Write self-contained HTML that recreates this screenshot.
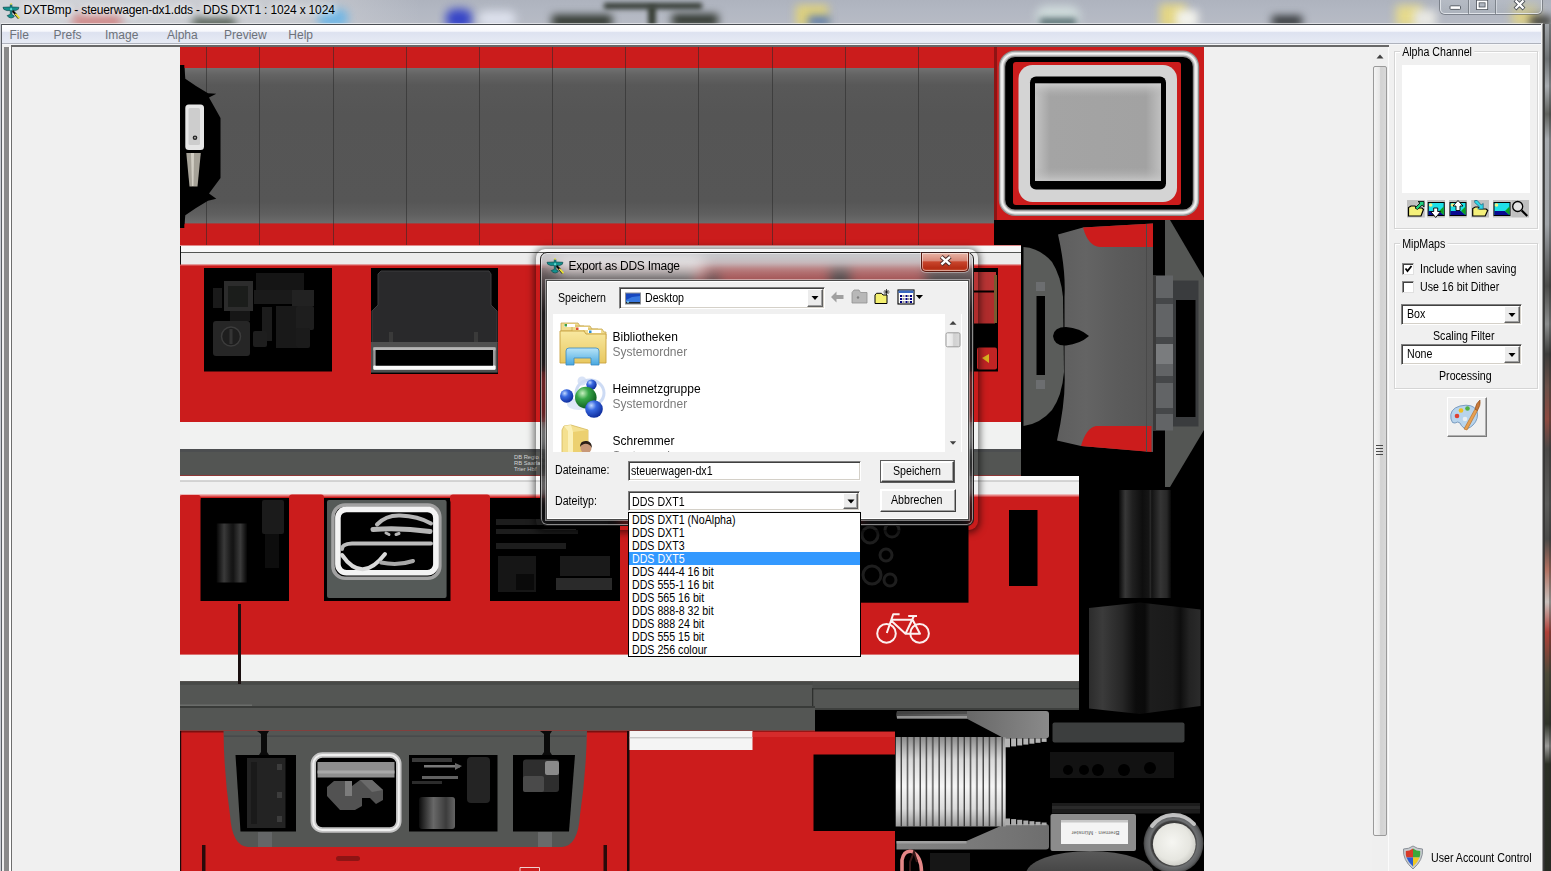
<!DOCTYPE html>
<html>
<head>
<meta charset="utf-8">
<title>DXTBmp</title>
<style>
html,body{margin:0;padding:0;}
body{width:1551px;height:871px;overflow:hidden;position:relative;background:#f0f0f0;font-family:"Liberation Sans",sans-serif;font-size:12px;color:#000;}
.abs{position:absolute;}
#titlebar{left:0;top:0;width:1551px;height:24px;background:#abb1b9;overflow:hidden;}
#titletext{left:23.500px;top:2.500px;font-size:12px;letter-spacing:-0.170px;white-space:nowrap;color:#000;text-shadow:0 0 6px #fff,0 0 10px #fff;}
#menubar{left:2px;top:24.500px;width:1540px;height:18.500px;background:linear-gradient(#ffffff 0,#f7f8fc 34%,#dde2f0 42%,#e7ebf5 100%);}
.mi{top:3.500px;color:#6d727a;font-size:12px;white-space:nowrap;}
#client{left:2px;top:46px;width:1540px;height:825px;background:#f0f0f0;}
.t11{font-size:11px;white-space:nowrap;}
</style>
</head>
<body>
<!-- title bar -->
<div id="titlebar" class="abs">
<div class="abs" style="left:0;top:0;width:1551px;height:24px;background:linear-gradient(#aeb3be 0,#b2b7c2 40%,#b7bbc5 100%)"></div>
<div class="abs" style="left:0;top:0;width:420px;height:24px;background:linear-gradient(90deg,rgba(214,216,220,0.9) 0,rgba(206,208,212,0.75) 70%,rgba(170,176,184,0) 100%)"></div>
<div class="abs" style="left:72px;top:14px;width:50px;height:14px;background:#d08888;filter:blur(5px);border-radius:6px"></div>
<div class="abs" style="left:192px;top:18px;width:44px;height:9px;background:#465246;filter:blur(4px);border-radius:5px"></div>
<div class="abs" style="left:318px;top:9px;width:30px;height:18px;background:#62b4ea;filter:blur(5px);border-radius:8px;opacity:0.85"></div>
<div class="abs" style="left:446px;top:9px;width:26px;height:20px;background:#2838c8;filter:blur(5px);border-radius:8px;opacity:0.9"></div>
<div class="abs" style="left:478px;top:11px;width:38px;height:16px;background:#e4e8f4;filter:blur(5px);border-radius:8px;opacity:0.85"></div>
<div class="abs" style="left:604px;top:3px;width:98px;height:6px;background:#30362e;filter:blur(2.500px)"></div>
<div class="abs" style="left:552px;top:15px;width:60px;height:12px;background:#2c322a;filter:blur(4px)"></div>
<div class="abs" style="left:648px;top:6px;width:8px;height:20px;background:#3a4038;filter:blur(2px)"></div>
<div class="abs" style="left:672px;top:14px;width:46px;height:12px;background:#2c322a;filter:blur(4px)"></div>
<div class="abs" style="left:796px;top:5px;width:32px;height:22px;background:#e0d27c;filter:blur(4.500px)"></div>
<div class="abs" style="left:808px;top:16px;width:22px;height:10px;background:#5878b8;filter:blur(4px)"></div>
<div class="abs" style="left:1036px;top:6px;width:44px;height:22px;background:#d0dcdc;filter:blur(5px);border-radius:10px"></div>
<div class="abs" style="left:1040px;top:18px;width:36px;height:8px;background:#5a7074;filter:blur(3px)"></div>
<div class="abs" style="left:1160px;top:4px;width:26px;height:24px;background:#e4d684;filter:blur(4.500px)"></div>
<div class="abs" style="left:1176px;top:10px;width:22px;height:18px;background:#f2f2ec;filter:blur(4px)"></div>
<div class="abs" style="left:1272px;top:16px;width:30px;height:10px;background:#2a2e30;filter:blur(4px)"></div>
<div class="abs" style="left:1396px;top:5px;width:26px;height:22px;background:#e6da8c;filter:blur(5px)"></div>
<div class="abs" style="left:1414px;top:10px;width:22px;height:18px;background:#e8e8e4;filter:blur(4px)"></div>
<div class="abs" style="left:1512px;top:4px;width:26px;height:22px;background:#dcd08a;filter:blur(5px)"></div>
<div class="abs" style="left:1530px;top:16px;width:22px;height:10px;background:#3a3a34;filter:blur(4px)"></div>
</div>
<!-- app icon -->
<svg class="abs" style="left:2px;top:2px" width="18" height="18" viewBox="0 0 18 18">
<path d="M8.300 2.500 H9.900 V5 L16.900 5.300 L16.300 7.300 L13.500 8.600 H9.900 V12.400 L12.300 14 L11.500 15.300 L9.100 16 L6.700 15.300 L5.200 13.600 L8.300 12.400 V8.600 H4.800 L1.800 7.300 L1 5.300 L8.300 5Z" fill="#12908e" stroke="#0a4a4c" stroke-width="0.700"/>
<rect x="8.300" y="1.200" width="1.600" height="1.600" fill="#e8e050"/>
<circle cx="9.100" cy="7.200" r="1.100" fill="#60d8d0"/>
<path d="M10.600 9 L14.500 13" stroke="#080808" stroke-width="2"/><path d="M13.200 11.800 L17.300 16.300" stroke="#e8e030" stroke-width="2"/><path d="M12.600 12.600 L16.200 16.800" stroke="#101010" stroke-width="0.800"/>
</svg>
<div id="titletext" class="abs"><span id="t_title">DXTBmp - steuerwagen-dx1.dds - DDS DXT1 : 1024 x 1024</span></div>
<!-- window controls -->
<div class="abs" style="left:1440px;top:-2px;width:102px;height:16px;border:1px solid rgba(230,234,238,0.85);border-radius:0 0 5px 5px;box-shadow:0 0 0 1px rgba(80,86,94,0.55);background:linear-gradient(rgba(190,196,204,0.5),rgba(160,168,176,0.35));box-sizing:border-box"></div>
<div class="abs" style="left:1468px;top:0;width:1px;height:14px;background:rgba(90,96,104,0.6)"></div><div class="abs" style="left:1469px;top:0;width:1px;height:13px;background:rgba(230,234,238,0.6)"></div>
<div class="abs" style="left:1495px;top:0;width:1px;height:14px;background:rgba(90,96,104,0.6)"></div><div class="abs" style="left:1496px;top:0;width:1px;height:13px;background:rgba(230,234,238,0.6)"></div>
<svg class="abs" style="left:1440px;top:0" width="102" height="14" viewBox="1440 0 102 14">
<rect x="1450" y="5.800" width="10.500" height="3.600" rx="0.800" fill="#fff" stroke="#4a5058" stroke-width="0.900"/>
<rect x="1477.800" y="1.500" width="8.600" height="6.800" fill="none" stroke="#4a5058" stroke-width="3.400"/>
<rect x="1477.800" y="1.500" width="8.600" height="6.800" fill="none" stroke="#fff" stroke-width="1.800"/>
<path d="M1515 0 L1524 9 M1524 0 L1515 9" stroke="#4a5058" stroke-width="4"/>
<path d="M1515.500 0.500 L1523.500 8.500 M1523.500 0.500 L1515.500 8.500" stroke="#fff" stroke-width="2.300"/>
</svg>
<!-- menu -->
<div class="abs" style="left:1px;top:22.600px;width:1542px;height:1px;background:rgba(255,255,255,0.55)"></div><div class="abs" style="left:1px;top:23.600px;width:1542px;height:1px;background:#4a4e54"></div>
<div id="menubar" class="abs">
<span class="abs mi" id="t_m1" style="left:7.500px">File</span>
<span class="abs mi" id="t_m2" style="left:51.500px">Prefs</span>
<span class="abs mi" id="t_m3" style="left:103px">Image</span>
<span class="abs mi" id="t_m4" style="left:165px">Alpha</span>
<span class="abs mi" id="t_m5" style="left:222px">Preview</span>
<span class="abs mi" id="t_m6" style="left:286.300px">Help</span>
</div>
<div class="abs" style="left:2px;top:42.800px;width:1540px;height:1.300px;background:#aeb2bc"></div><div class="abs" style="left:2px;top:44.100px;width:1540px;height:1px;background:#f6f7f9"></div>
<div id="client" class="abs" style="top:45px"></div>
<!-- TEXTURE -->
<svg id="tex" class="abs" style="left:180px;top:46px" width="1024" height="825" viewBox="180 46 1024 825">
<rect x="180" y="46" width="1024" height="825" fill="#000"/>
<defs>
<linearGradient id="roofg" x1="0" y1="0" x2="0" y2="1">
<stop offset="0" stop-color="#717171"/><stop offset="0.045" stop-color="#636363"/><stop offset="0.11" stop-color="#585858"/><stop offset="0.3" stop-color="#555555"/><stop offset="0.86" stop-color="#565656"/><stop offset="0.94" stop-color="#5f5f5f"/><stop offset="1" stop-color="#6d6d6d"/>
</linearGradient>
<linearGradient id="glassg" x1="0" y1="0" x2="1" y2="0">
<stop offset="0" stop-color="#c4c4c4"/><stop offset="0.12" stop-color="#a4a4a4"/><stop offset="0.88" stop-color="#a2a2a2"/><stop offset="1" stop-color="#c0c0c0"/>
</linearGradient>
<linearGradient id="cylg" x1="0" y1="0" x2="1" y2="0">
<stop offset="0" stop-color="#050505"/><stop offset="0.25" stop-color="#3a3a3a"/><stop offset="0.48" stop-color="#181818"/><stop offset="0.55" stop-color="#141414"/><stop offset="0.78" stop-color="#3c3c3c"/><stop offset="1" stop-color="#060606"/>
</linearGradient>
<linearGradient id="glassv" x1="0" y1="0" x2="0" y2="1"><stop offset="0" stop-color="#d0d0d0" stop-opacity="0.9"/><stop offset="0.14" stop-color="#b0b0b0" stop-opacity="0"/><stop offset="0.86" stop-color="#b0b0b0" stop-opacity="0"/><stop offset="1" stop-color="#cacaca" stop-opacity="0.9"/></linearGradient>
</defs>
<!-- BAND 1 roof -->
<g id="band1">
<rect x="180" y="47" width="814" height="198" fill="#cb1c1c"/>
<rect x="180" y="68" width="814" height="155.400" fill="url(#roofg)"/>
<g stroke="#2a2a2a" stroke-width="1" opacity="0.55">
<path d="M206.5 47V245M259.5 47V245M333.5 47V245M406.5 47V245M479.5 47V245M552.5 47V245M625.5 47V245M698.5 47V245M772.5 47V245M845.5 47V245M918.5 47V245"/>
</g>
<path d="M180 65.300 L184.500 68 L185.300 78.800 L196 86 L208 93.200 L216.300 93.700 L209 97.400 L220.500 118 V178 L209 193.600 L216.300 198.800 L208 200.800 L196 208 L185.300 215.300 L184.500 224 L180 228Z" fill="#000"/>
<rect x="180" y="65" width="4.300" height="163" fill="#000"/>
<rect x="185.300" y="104.600" width="18.700" height="45.400" rx="3.500" fill="#e6e6e6"/>
<rect x="188.500" y="108" width="11.500" height="37" rx="1.500" fill="#cdcdcd"/>
<circle cx="195" cy="137.700" r="2.300" fill="#222"/><circle cx="195" cy="137.700" r="0.900" fill="#bbb"/>
<path d="M186.300 153 H200.800 L197.500 186.400 H189.500Z" fill="#a6a298"/>
<path d="M191 153 H194 L193.500 186 H192Z" fill="#d2cec4"/>
<rect x="994" y="47" width="4" height="173" fill="#8e1414"/>
</g>
<!-- top-right window -->
<g id="trwin">
<rect x="997" y="47" width="207" height="173" fill="#cb1c1c"/>
<rect x="1002" y="53.700" width="194" height="159" rx="13" fill="#000" stroke="#8e8e8e" stroke-width="6.400"/>
<rect x="1002" y="53.700" width="194" height="159" rx="13" fill="none" stroke="#cfcfcf" stroke-width="4"/>
<rect x="1002" y="53.700" width="194" height="159" rx="13" fill="none" stroke="#f4f4f4" stroke-width="1.600"/>
<rect x="1013" y="62" width="168" height="143" rx="3" fill="#cb1c1c"/>
<rect x="1018.500" y="65" width="158.500" height="137" rx="14" fill="#d4d4d4"/>
<rect x="1030" y="76.500" width="136" height="113" rx="6" fill="#000"/>
<rect x="1035" y="83.500" width="126" height="97.500" fill="url(#glassg)"/>
<rect x="1035" y="83.500" width="126" height="97.500" fill="url(#glassv)"/>
</g>
<!-- BAND 2 -->
<g id="band2">
<rect x="180" y="245" width="841" height="231" fill="#cb1c1c"/>
<rect x="180" y="245.500" width="841" height="7" fill="#f8f8f8"/>
<rect x="180" y="252" width="841" height="1" fill="#535553"/>
<rect x="180" y="253" width="841" height="12" fill="#ececec"/>
<rect x="180" y="246" width="1" height="19" fill="#111"/>
<rect x="180" y="264.500" width="841" height="1.500" fill="#d84a4a"/>
<rect x="180" y="422" width="841" height="27" fill="#f1f2f1"/>
<rect x="180" y="449" width="841" height="26.500" fill="#535553"/>
<rect x="180" y="449" width="841" height="3" fill="#4c4e50"/>
<!-- window 1 -->
<rect x="204" y="268" width="128" height="103.500" fill="#000"/>
<rect x="224" y="281" width="29" height="30" fill="#2c2c2c"/>
<rect x="228" y="286" width="20" height="21" fill="#1b1d1b"/>
<rect x="213" y="288" width="9" height="20" fill="#1a1a1a"/>
<rect x="230" y="311" width="20" height="10" fill="#161616"/>
<rect x="213" y="321" width="37" height="35" rx="3" fill="#262626"/>
<circle cx="231" cy="336.500" r="9.500" fill="#1e1e1e" stroke="#3c3c3c" stroke-width="1.500"/>
<rect x="229.500" y="329" width="3" height="15" fill="#343434"/>
<rect x="256" y="273" width="48" height="20" fill="#151515"/>
<rect x="254" y="290" width="60" height="14" fill="#1a1a1a"/>
<rect x="292" y="290" width="22" height="16" fill="#222"/>
<rect x="262" y="307" width="10" height="34" fill="#1c1c1c"/>
<rect x="276" y="306" width="26" height="42" fill="#191919"/>
<rect x="296" y="306" width="18" height="24" rx="2" fill="#1e1e1e"/>
<rect x="296" y="328" width="14" height="20" rx="2" fill="#1b1b1b"/>
<rect x="253" y="331" width="14" height="16" rx="2" fill="#1e1e1e"/>
<!-- window 2 -->
<rect x="371" y="268" width="127" height="106" fill="#000"/>
<path d="M381 271 H489 L491 274 V305 L497 311 V343 H372 V311 L378 305 V274 Z" fill="#29292b"/>
<path d="M381 271 H489 L491 274 V305 L497 311 V343 H372 V311 L378 305 V274 Z" fill="none" stroke="#3c3c3e" stroke-width="1"/>
<rect x="389" y="332" width="4" height="11" fill="#3a3a3a"/><rect x="474" y="332" width="4" height="11" fill="#3a3a3a"/>
<rect x="371" y="342" width="126.700" height="30.600" fill="#505050"/>
<rect x="373.300" y="347.300" width="122.300" height="22.500" rx="1.500" fill="#9c9c9c"/>
<rect x="373.300" y="347.300" width="122.300" height="3" fill="#b6b6b6"/>
<rect x="373.300" y="365.500" width="122.300" height="4.300" rx="1" fill="#fbfbfb"/>
<rect x="375.600" y="350" width="117.400" height="15.700" fill="#000"/>
<!-- window 3 (right, mostly hidden) -->
<rect x="540" y="268" width="155" height="103.500" fill="#000"/><rect x="704" y="273" width="16" height="20" fill="#2a1010"/><rect x="830" y="268" width="20" height="103.500" fill="#000"/><rect x="925" y="268" width="73" height="103.500" fill="#000"/>
<rect x="972" y="272" width="24" height="18.500" fill="#b83434"/>
<rect x="972" y="292.500" width="23" height="31" fill="#b02c2c"/>
<rect x="994" y="275" width="3" height="48" fill="#7a5a30"/>
<rect x="977" y="347.500" width="20" height="22" rx="2" fill="#c02424"/>
<path d="M982 358 L989 354 V363 Z" fill="#d8b020"/>
<!-- tiny text -->
<text x="514" y="458.600" font-size="5.800" fill="#d2d2d2" font-family="Liberation Sans, sans-serif">DB Regio AG</text>
<text x="514" y="464.800" font-size="5.800" fill="#d2d2d2" font-family="Liberation Sans, sans-serif">RB Saarland</text>
<text x="514" y="471" font-size="5.800" fill="#d2d2d2" font-family="Liberation Sans, sans-serif">Trier Hbf</text>
</g>
<!-- BAND 3 -->
<g id="band3">
<rect x="180" y="476" width="899" height="255.500" fill="#cb1c1c"/>
<rect x="180" y="476" width="899" height="19.500" fill="#f0f0f0"/>
<rect x="180" y="476" width="899" height="4.500" fill="#fbfbfb"/>
<rect x="180" y="480.500" width="899" height="1" fill="#b4b4b4"/>
<rect x="180" y="494.500" width="899" height="2" fill="#e88080"/>
<rect x="180" y="654.600" width="899" height="27" fill="#f1f2f1"/>
<rect x="180" y="681.300" width="899" height="49.300" fill="#545654"/>
<rect x="180" y="681.300" width="633" height="3.500" fill="#474947"/>
<rect x="180" y="706" width="635" height="2" fill="#393b39"/>
<rect x="180" y="704.500" width="72" height="1.500" fill="#6a6c6a"/>
<rect x="812.500" y="681.300" width="266.500" height="6.700" fill="#4b4d4b"/>
<rect x="812.500" y="688" width="266.500" height="1.500" fill="#3a3c3a"/>
<rect x="812" y="688" width="1.300" height="18" fill="#2e302e"/>
<rect x="815" y="708" width="264" height="2" fill="#3e403e"/>
<rect x="815" y="710" width="264" height="22" fill="#000"/>
<!-- win A -->
<rect x="200.500" y="498" width="88.500" height="103" fill="#000"/>
<rect x="180" y="495" width="20.500" height="6" rx="2" fill="#cb1c1c"/>
<rect x="289" y="494.500" width="35" height="8" rx="3" fill="#cb1c1c"/>
<rect x="216.500" y="523.500" width="30.500" height="59" fill="url(#cylg)"/>
<rect x="262" y="500" width="22" height="34" rx="2" fill="#1b1b1b"/>
<rect x="265" y="534" width="14" height="34" fill="#0d0d0d"/>
<!-- win B -->
<rect x="324" y="498" width="126.500" height="103" fill="#000"/>
<rect x="327" y="500" width="119.600" height="98" rx="2" fill="#555a58"/>
<rect x="333" y="505" width="106.800" height="73.200" rx="12" fill="#000" stroke="#a2a2a2" stroke-width="3.600"/>
<rect x="337.900" y="509.400" width="98" height="63.400" rx="8.500" fill="none" stroke="#f4f4f4" stroke-width="5.600"/>
<g fill="none" stroke="#b6b6b6" stroke-width="4" stroke-linecap="round">
<path d="M377 524.500 Q386 515 400 515.500 Q418 516 431 523.500"/>
<path d="M373 529.500 Q400 527.500 430 531.500" stroke-width="5"/>
<path d="M386 533 L389 534.500 M396 534.500 L399 533.500" stroke-width="3"/>
<path d="M342 549 Q342 544 352 543.500 H431" stroke="#bcbcbc"/>
<path d="M342 555 Q362 584 385 554" stroke="#dadada"/>
<path d="M381 562.500 Q398 566 413 561" stroke="#a8a8a8"/>
</g>
<!-- win C -->
<rect x="450" y="494.500" width="40" height="8" rx="3" fill="#cb1c1c"/>
<rect x="490" y="498" width="130" height="103" fill="#000"/>
<g fill="#1d1d1d">
<rect x="496" y="519" width="112" height="6"/><rect x="496" y="529" width="80" height="5"/><rect x="538" y="530" width="40" height="4"/>
<rect x="496" y="543" width="70" height="6"/><rect x="530" y="545" width="36" height="4"/>
<rect x="498" y="556" width="38" height="36" fill="#161616"/><rect x="516" y="574" width="18" height="16" fill="#0a0a0a"/>
<rect x="556" y="578" width="56" height="12" fill="#2a2a2a"/><rect x="560" y="556" width="50" height="20" fill="#1a1a1a"/>
</g>
<!-- right part -->
<rect x="860" y="498" width="108.500" height="104.700" fill="#000"/>
<g fill="none" stroke="#1e1e1e" stroke-width="3"><circle cx="870" cy="535" r="8"/><circle cx="886" cy="555" r="6"/><circle cx="872" cy="575" r="9"/><circle cx="890" cy="580" r="6"/><circle cx="892" cy="530" r="7"/></g>
<rect x="1009" y="510" width="28.500" height="76" fill="#000"/>
<!-- bicycle -->
<g fill="none" stroke="#fcf0f0" stroke-width="2" stroke-linejoin="round">
<circle cx="886.500" cy="633.400" r="9.300"/><circle cx="919.600" cy="633.400" r="9.300"/>
<path d="M899.600 614.200 H893.200 L886.800 633 M892.200 619.800 H912.600 M891.600 621 L905.500 633.800 H920 L912.600 619.800 M905.500 633.800 L913.800 616.200 M908.200 616 H917"/>
</g>
<!-- vertical rod -->
<rect x="238" y="604" width="3" height="80" fill="#1a1010"/>
</g>
<!-- BAND 4 -->
<defs>
<linearGradient id="corrg" x1="0" y1="0" x2="0" y2="1">
<stop offset="0" stop-color="#8c8c8c"/><stop offset="0.25" stop-color="#d8d8d8"/><stop offset="0.55" stop-color="#f6f6f6"/><stop offset="0.8" stop-color="#dcdcdc"/><stop offset="1" stop-color="#9a9a9a"/>
</linearGradient>
<linearGradient id="wedgeg" x1="0" y1="0" x2="1" y2="0">
<stop offset="0" stop-color="#484848"/><stop offset="0.5" stop-color="#6a6a6a"/><stop offset="1" stop-color="#8a8a8a"/>
</linearGradient>
<pattern id="corrp" x="895.700" y="0" width="6.300" height="10" patternUnits="userSpaceOnUse"><rect x="5" y="0" width="1.200" height="10" fill="#303030"/></pattern>
<linearGradient id="w3g" x1="0" y1="0" x2="1" y2="0">
<stop offset="0" stop-color="#0c0c0c"/><stop offset="0.4" stop-color="#686868"/><stop offset="0.75" stop-color="#3c3c3c"/><stop offset="1" stop-color="#646464"/>
</linearGradient>
<radialGradient id="lampg" cx="0.5" cy="0.5" r="0.5">
<stop offset="0" stop-color="#4a4a4a"/><stop offset="0.74" stop-color="#3c3c3c"/><stop offset="0.8" stop-color="#6e7072"/><stop offset="0.93" stop-color="#5c5e60"/><stop offset="1" stop-color="#3e3e3e"/>
</radialGradient>
<radialGradient id="lampc" cx="0.45" cy="0.45" r="0.6"><stop offset="0" stop-color="#f6f6f2"/><stop offset="0.7" stop-color="#e6e6e0"/><stop offset="1" stop-color="#c8c8c2"/></radialGradient>
<linearGradient id="ellg" x1="0" y1="0" x2="0" y2="1"><stop offset="0" stop-color="#5a5a5a"/><stop offset="0.5" stop-color="#444"/><stop offset="1" stop-color="#3a3a3a"/></linearGradient>
<linearGradient id="wedgeg2" x1="0" y1="0" x2="1" y2="0"><stop offset="0" stop-color="#848484"/><stop offset="0.5" stop-color="#7a7a7a"/><stop offset="1" stop-color="#6e6e6e"/></linearGradient>
</defs>
<g id="band4">
<rect x="180" y="731.500" width="715" height="140" fill="#cc1c1c"/>
<rect x="180" y="731" width="448" height="1.500" fill="#7a1010"/>
<rect x="180" y="731" width="1.200" height="140" fill="#1a0a0a"/>
<!-- gray panel -->
<path d="M223.500 731 H587 Q586 775 580 815 Q578 846 562 847 H248 Q232 846 230 815 Q224 775 223.500 731Z" fill="#545654"/>
<rect x="224" y="735.500" width="362" height="1.200" fill="#444648"/>
<rect x="258" y="832" width="14" height="15" fill="#707274" opacity="0.6"/><rect x="538" y="832" width="14" height="15" fill="#78797b" opacity="0.6"/>
<!-- W1 -->
<path d="M235.500 755 H296 V831.500 H240.500Z" fill="#000"/>
<rect x="247" y="758" width="38.500" height="70" fill="#232323"/>
<rect x="251" y="762" width="6" height="62" fill="#1a1a1a"/>
<rect x="277" y="764" width="5" height="6" fill="#3c3c3c"/><rect x="277" y="792" width="5" height="6" fill="#3c3c3c"/><rect x="277" y="816" width="5" height="6" fill="#3c3c3c"/>
<path d="M257 731 H269 L267 734 V752 L269 755 H259 L261 752 V734Z" fill="#0a0a0a"/>
<!-- W2 -->
<rect x="313.300" y="755" width="85.500" height="75" rx="9" fill="#000" stroke="#c4c4c4" stroke-width="5.500"/>
<rect x="313.300" y="755" width="85.500" height="75" rx="9" fill="none" stroke="#f0f0f0" stroke-width="2"/>
<rect x="317.500" y="762" width="77" height="15.500" fill="#8e8e8e"/>
<rect x="317.500" y="770.500" width="77" height="3" fill="#a8a8a8"/>
<path d="M327 787 L334 781 H345 V786 H352 L360 780 H372 L383 790 V800 L376 804 L370 798 H362 V806 L355 810 H340 L327 796Z" fill="#525252"/>
<path d="M345 781 H352 V796 H345Z" fill="#7c7c7c"/>
<path d="M360 780 H372 L383 790 L372 792Z" fill="#6a6a6a"/>
<!-- W3 -->
<rect x="409" y="755" width="88.500" height="76.500" fill="#000"/>
<rect x="419" y="797" width="36" height="32" rx="3" fill="url(#w3g)"/>
<rect x="467" y="757" width="23" height="46" rx="4" fill="#242424"/>
<rect x="424" y="765" width="36" height="2.500" fill="#7a7a7a"/><path d="M455 763 L462 766 L455 770Z" fill="#6a6a6a"/>
<rect x="412" y="758" width="40" height="4" fill="#3a3a3a"/>
<rect x="422" y="776" width="36" height="3" fill="#606060"/>
<rect x="412" y="781" width="30" height="3" fill="#2c2c2c"/>
<!-- W4 -->
<path d="M513 755 H575 L569 831.500 H513Z" fill="#000"/>
<rect x="523" y="759.500" width="36" height="32.500" rx="3" fill="#2e2e2e"/>
<rect x="545" y="761" width="14" height="14" rx="2" fill="#8a8a8a"/>
<rect x="523" y="776" width="21" height="16" rx="2" fill="#4a4a4a"/>
<path d="M540 731 H552 L550 734 V752 L552 755 H542 L544 752 V734Z" fill="#0a0a0a"/>
<!-- red misc -->
<rect x="202" y="845" width="3.500" height="26" fill="#2a0a0a"/>
<rect x="603.500" y="845" width="3.500" height="26" fill="#2a0a0a"/>
<rect x="336" y="856" width="24" height="5" rx="2.500" fill="#8e1414"/>
<path d="M520 871 V867.500 H539.500 V871" fill="none" stroke="#f0d0d0" stroke-width="1"/>
<rect x="627" y="731" width="2.500" height="140" fill="#1a0808"/>
<rect x="629.500" y="731" width="123" height="19" fill="#f4f4f4"/><rect x="629.500" y="737.300" width="123" height="1" fill="#b8b8b8"/><rect x="752.500" y="732" width="142.500" height="5" fill="#d83232" opacity="0.7"/>

<rect x="813.500" y="754.500" width="81.500" height="76.500" fill="#000"/>

<!-- coupling area -->
<path d="M897 711 H1046 Q1049 711 1049 714 V735.500 Q1049 738.300 1046 738.300 H1004 L966.500 718.600 H897 Q895.500 715 897 711Z" fill="url(#wedgeg)"/>
<rect x="897" y="711" width="70" height="3" fill="#3e3e3e" opacity="0.6"/><rect x="897" y="716" width="70" height="2.600" fill="#a4a4a4" opacity="0.8"/>
<path d="M896.500 849.600 H1046 Q1049 849.600 1049 846.600 V827 Q1049 824 1046 824 H1005.300 L966.500 841 H896.500Z" fill="url(#wedgeg2)"/>
<rect x="896.500" y="841" width="70" height="2.500" fill="#a8a8a8" opacity="0.8"/>
<rect x="895.700" y="737" width="110" height="89.500" fill="url(#corrg)"/>
<rect x="895.700" y="737" width="110" height="89.500" fill="url(#corrp)"/>
<g><rect x="1005.0" y="738.300" width="5" height="9.0" fill="#b4b4b4"/><rect x="1005.0" y="818.5" width="5" height="6.8" fill="#ababab"/><rect x="1011.1" y="738.300" width="5" height="8.1" fill="#b4b4b4"/><rect x="1011.1" y="819.1" width="5" height="6.1" fill="#ababab"/><rect x="1017.2" y="738.300" width="5" height="7.2" fill="#b4b4b4"/><rect x="1017.2" y="819.8" width="5" height="5.4" fill="#ababab"/><rect x="1023.3" y="738.300" width="5" height="6.3" fill="#b4b4b4"/><rect x="1023.3" y="820.5" width="5" height="4.7" fill="#ababab"/><rect x="1029.4" y="738.300" width="5" height="5.4" fill="#b4b4b4"/><rect x="1029.4" y="821.2" width="5" height="4.1" fill="#ababab"/><rect x="1035.5" y="738.300" width="5" height="4.5" fill="#b4b4b4"/><rect x="1035.5" y="821.8" width="5" height="3.4" fill="#ababab"/><rect x="1041.6" y="738.300" width="5" height="3.6" fill="#b4b4b4"/><rect x="1041.6" y="822.5" width="5" height="2.7" fill="#ababab"/></g>
<rect x="1052.500" y="722.500" width="132" height="20" rx="2" fill="#3c3e3e"/>
<rect x="1050" y="752" width="124" height="26" fill="#121212"/>
<g fill="#000"><circle cx="1068" cy="770" r="5"/><circle cx="1084" cy="770" r="5"/><circle cx="1098" cy="770" r="6"/><circle cx="1124" cy="770" r="6"/><circle cx="1150" cy="768" r="6"/></g>
<rect x="1052" y="803" width="148" height="10.500" fill="#1c1c1c"/><rect x="1052" y="806" width="148" height="3" fill="#2a2a2a"/>
<rect x="1050.500" y="814" width="85.500" height="37" rx="2" fill="#8c8c8c"/>
<rect x="1061" y="820" width="67" height="24" fill="#f4f4f4"/>
<rect x="1061" y="820" width="67" height="2.500" fill="#c8c8c8"/>
<text transform="translate(1119.500 831) rotate(180)" font-size="6" fill="#666" font-family="Liberation Sans, sans-serif">Bremen · Münster</text>
<ellipse cx="1090" cy="874" rx="64" ry="23" fill="url(#ellg)"/>
<circle cx="1173.500" cy="843.500" r="29.900" fill="url(#lampg)"/>
<path d="M1152 826 A27 27 0 0 1 1194 824" fill="none" stroke="#d4d4d4" stroke-width="4" stroke-linecap="round" opacity="0.85"/>
<circle cx="1174.300" cy="844.300" r="21.400" fill="url(#lampc)"/>
<path d="M902 871 V860 Q904 850 912 851.500 Q921 856 921.500 871" fill="none" stroke="#e48888" stroke-width="3.600"/>
<path d="M910 871 V862 L914 852 L917 862" fill="none" stroke="#3a1a1a" stroke-width="2"/>
<rect x="930" y="853" width="40" height="18" fill="#161616"/>
</g>
<!-- NOSE / right column -->
<defs>
<linearGradient id="noseg" x1="0" y1="0" x2="1" y2="0">
<stop offset="0" stop-color="#5e5e5e"/><stop offset="0.3" stop-color="#646464"/><stop offset="0.6" stop-color="#5c5c5c"/><stop offset="1" stop-color="#555555"/>
</linearGradient>
<linearGradient id="cyl2" x1="0" y1="0" x2="1" y2="0">
<stop offset="0" stop-color="#080808"/><stop offset="0.12" stop-color="#383838"/><stop offset="0.26" stop-color="#202020"/><stop offset="0.45" stop-color="#0e0e0e"/><stop offset="0.58" stop-color="#161616"/><stop offset="0.6" stop-color="#2c2c2c"/><stop offset="0.63" stop-color="#131313"/><stop offset="0.8" stop-color="#353535"/><stop offset="0.92" stop-color="#282828"/><stop offset="1" stop-color="#080808"/>
</linearGradient>
<linearGradient id="cyl3" x1="0" y1="0" x2="1" y2="0">
<stop offset="0" stop-color="#2c2c2c"/><stop offset="0.12" stop-color="#3b3b3b"/><stop offset="0.3" stop-color="#262626"/><stop offset="0.42" stop-color="#0c0c0c"/><stop offset="0.5" stop-color="#0a0a0a"/><stop offset="0.55" stop-color="#1d1d1d"/><stop offset="0.75" stop-color="#1a1a1a"/><stop offset="0.82" stop-color="#0e0e0e"/><stop offset="0.9" stop-color="#232323"/><stop offset="1" stop-color="#2b2b2b"/>
</linearGradient>
</defs>
<g id="nose">
<!-- left crescent -->
<path d="M1023.500 247 Q1040 248 1052 262 Q1061 276 1063 297 L1064 372 Q1062 396 1052 410 Q1040 424 1023.500 426Z" fill="#5a5c5a"/>
<rect x="1036.500" y="296" width="8.500" height="79" fill="#000"/>
<rect x="1036" y="282" width="9" height="9" fill="#6c6e70"/><rect x="1036" y="380" width="9" height="9" fill="#6c6e70"/>
<!-- main body -->
<path d="M1058 234.500 L1083 227.500 L1153 223.500 V452 L1081 446 L1057 440.500 Q1066 400 1064.500 372 V297 Q1066 270 1058 234.500Z" fill="url(#noseg)"/>
<path d="M1083 227.500 L1153 223.500 V247 H1100 Q1088 246 1083 227.500Z" fill="#cc1c1c"/>
<path d="M1081 446 L1151.500 452 V426 H1096 Q1086 428 1081 446Z" fill="#cc1c1c"/>
<rect x="1146" y="224" width="1" height="228" fill="#4a4a4a"/>
<path d="M1053 336 Q1054 327 1066 327 Q1080 328 1089 336 Q1080 344 1066 345.500 Q1054 346 1053 336Z" fill="#000"/>
<!-- right wedge -->
<path d="M1165 220 H1170 L1204 278 V430 L1170 487 H1165Z" fill="#545654"/>
<rect x="1153" y="275.500" width="20" height="155" fill="#626466"/>
<rect x="1153" y="275.500" width="3" height="155" fill="#3a3a3a"/>
<rect x="1156" y="298" width="17" height="6" fill="#454749"/><rect x="1156" y="337" width="17" height="7" fill="#454749"/><rect x="1156" y="376" width="17" height="7" fill="#454749"/><rect x="1156" y="408" width="17" height="6" fill="#454749"/>
<rect x="1156" y="344" width="17" height="20" fill="#7a7c7e"/>
<rect x="1173" y="280.500" width="25.500" height="146" fill="#3a3c3e"/>
<rect x="1176" y="300" width="19.500" height="117" fill="#000"/>
<!-- cylinders -->
<rect x="1119" y="490" width="52" height="108" fill="url(#cyl2)"/>
<path d="M1089 608 L1140 602.600 L1200.500 609.500 V706 L1140 714 L1089 708.600Z" fill="url(#cyl3)"/>
</g>
</svg>
<!-- left bars -->
<div class="abs" style="left:0;top:24px;width:2px;height:847px;background:#c9ccd2"></div>
<div class="abs" style="left:1.200px;top:24px;width:1px;height:847px;background:#5a5e64"></div>

<div class="abs" style="left:4px;top:47px;width:5px;height:824px;background:#8a8a8a"></div>
<div class="abs" style="left:9px;top:47px;width:1.500px;height:824px;background:#fff"></div>
<div class="abs" style="left:10.500px;top:46px;width:1.800px;height:825px;background:#6e6e6e"></div>
<!-- v scrollbar -->
<div class="abs" style="left:1372px;top:46px;width:16px;height:825px;background:#efefef"></div>
<div class="abs" style="left:1388px;top:46px;width:1px;height:825px;background:#fbfbfb"></div>
<div class="abs" style="left:10.500px;top:45.300px;width:1378px;height:1.600px;background:#686868"></div>
<svg class="abs" style="left:1372px;top:46px" width="16" height="18"><path d="M4.500 12.500 L8 8.500 L11.500 12.500Z" fill="#404040"/></svg>
<div class="abs" style="left:1372.500px;top:65.500px;width:14px;height:770px;border:1px solid #9a9a9a;border-radius:2px;background:linear-gradient(90deg,#f4f4f4 0,#e8e8e8 45%,#d2d2d2 55%,#d8d8d8 100%);box-sizing:border-box"></div>
<svg class="abs" style="left:1375px;top:444px" width="10" height="12"><path d="M1 1.500H8M1 4.500H8M1 7.500H8M1 10.500H8" stroke="#4a4a4a" stroke-width="1"/></svg>
<!-- right panel -->
<style>
.gb{position:absolute;border:1px solid #d5d5d5;box-shadow:inset 1px 1px 0 #fff,1px 1px 0 #fff;box-sizing:border-box;}
.ms{position:absolute;font-family:"Liberation Sans",sans-serif;font-size:12.300px;white-space:nowrap;color:#000;line-height:14px;transform-origin:0 0;transform:scaleX(0.865);}
.cb{position:absolute;width:12px;height:12px;background:#fff;border:1px solid #8a8a8a;border-right-color:#e0e0e0;border-bottom-color:#e0e0e0;box-sizing:border-box;box-shadow:inset 1px 1px 0 #404040;}
.combo{position:absolute;background:#fff;border:1px solid #808080;border-right-color:#fff;border-bottom-color:#fff;box-shadow:inset 1px 1px 0 #404040, inset -1px -1px 0 #d4d0c8;box-sizing:border-box;}
.cbtn{position:absolute;background:#ececec;border:1px solid #fff;border-right-color:#606060;border-bottom-color:#606060;box-shadow:inset -1px -1px 0 #a0a0a0;box-sizing:border-box;}
</style>
<div class="gb" style="left:1394px;top:51px;width:144px;height:178px"></div>
<div class="ms" id="t_alpha" style="left:1400px;top:45px;background:#f0f0f0;padding:0 3px 0 2.500px">Alpha Channel</div>
<div class="abs" style="left:1402px;top:65px;width:128px;height:128px;background:#fff"></div>
<!-- toolbar icons -->
<svg class="abs" style="left:1407px;top:200px" width="123" height="18" viewBox="0 0 123 18">
<g>
<rect x="0" y="0" width="17.800" height="17.500" fill="#c0c0c0"/>
<path d="M1.500 16 V7.500 L4 6 H8 L9.500 8 H15 L16.500 9.500 L14 16Z" fill="#f4f07a" stroke="#000" stroke-width="1.200"/>
<path d="M8 8 L13 3 L11 1.500 H17 V7 L15.200 5 L10.500 9.500Z" fill="#20d080" stroke="#000" stroke-width="0.800"/>
</g>
<g transform="translate(20.200 0)">
<rect x="0" y="0" width="17.800" height="17.500" fill="#c0c0c0"/>
<rect x="1" y="2.500" width="16" height="13" fill="#1ee0e8" stroke="#000" stroke-width="1"/>
<path d="M1.500 11 H12 L16.500 15 H1.500Z" fill="#0a0a90"/><path d="M12 11 L16.500 6.500 V15Z" fill="#10a020"/>
<circle cx="3.500" cy="5" r="1.800" fill="#f4f080"/>
<path d="M6.500 8 H10.500 V11.500 H13.500 L8.500 17.500 L3.500 11.500 H6.500Z" fill="#fff" stroke="#000" stroke-width="0.900"/>
</g>
<g transform="translate(42 0)">
<rect x="0" y="0" width="17.800" height="17.500" fill="#c0c0c0"/>
<rect x="1" y="2.500" width="16" height="13" fill="#1ee0e8" stroke="#000" stroke-width="1"/>
<path d="M1.500 11 H12 L16.500 15 H1.500Z" fill="#0a0a90"/><path d="M12 11 L16.500 6.500 V15Z" fill="#10a020"/>
<circle cx="3.500" cy="5" r="1.800" fill="#f4f080"/>
<path d="M7 10.500 H11 V6 H14 L9 0.500 L4 6 H7Z" fill="#fff" stroke="#000" stroke-width="0.900"/>
</g>
<g transform="translate(64.200 0)">
<rect x="0" y="0" width="17.800" height="17.500" fill="#c0c0c0"/>
<path d="M1.500 16 V8.500 L4 7 H7 L8.500 9 H15 L16.500 10.500 L14 16Z" fill="#f4f07a" stroke="#000" stroke-width="1.200"/>
<path d="M3.500 0.500 L6 0.500 L10 5 L12 3.500 V9 H6.500 L8.500 7 L3.500 2.500Z" fill="#30d8e8" stroke="#106080" stroke-width="0.700"/>
</g>
<g transform="translate(86 0)">
<rect x="0" y="0" width="17.800" height="17.500" fill="#c0c0c0"/>
<rect x="1" y="2.500" width="16" height="13" fill="#1ee0e8" stroke="#000" stroke-width="1"/>
<path d="M1.500 11 H12 L16.500 15 H1.500Z" fill="#0a0a90"/><path d="M12 11 L16.500 6.500 V15Z" fill="#10a020"/>
<circle cx="3.500" cy="5" r="1.800" fill="#f4f080"/>
</g>
<g transform="translate(104.200 0)">
<rect x="0" y="0" width="17.800" height="17.500" fill="#c0c0c0"/>
<circle cx="6.500" cy="6.500" r="5" fill="#e4e4e4" stroke="#000" stroke-width="1.300"/>
<path d="M10.500 10.500 L16 16" stroke="#000" stroke-width="2.200"/>
</g>
</svg>
<div class="gb" style="left:1394px;top:242.500px;width:144px;height:146.500px"></div>
<div class="ms" id="t_mip" style="left:1400px;top:237px;background:#f0f0f0;padding:0 3px 0 2.500px">MipMaps</div>
<div class="cb" style="left:1402.300px;top:263px"></div>
<svg class="abs" style="left:1403px;top:263px" width="11" height="12"><path d="M2.500 5.500 L4.500 8 L8.500 3" fill="none" stroke="#000" stroke-width="1.800"/></svg>
<div class="ms" id="t_inc" style="left:1420px;top:262px">Include when saving</div>
<div class="cb" style="left:1402.300px;top:281.300px"></div>
<div class="ms" id="t_use" style="left:1420px;top:280px">Use 16 bit Dither</div>
<div class="combo" style="left:1401px;top:304px;width:120.500px;height:21px"></div>
<div class="cbtn" style="left:1504px;top:306px;width:15.500px;height:17px"></div>
<svg class="abs" style="left:1504px;top:306px" width="16" height="17"><path d="M4.500 7 H11.500 L8 11Z" fill="#000"/></svg>
<div class="ms" id="t_box" style="left:1406.500px;top:307px">Box</div>
<div class="ms" id="t_scal" style="left:1432.500px;top:329px">Scaling Filter</div>
<div class="combo" style="left:1401px;top:344px;width:120.500px;height:21px"></div>
<div class="cbtn" style="left:1504px;top:346px;width:15.500px;height:17px"></div>
<svg class="abs" style="left:1504px;top:346px" width="16" height="17"><path d="M4.500 7 H11.500 L8 11Z" fill="#000"/></svg>
<div class="ms" id="t_none" style="left:1406.500px;top:347px">None</div>
<div class="ms" id="t_proc" style="left:1438.500px;top:369px">Processing</div>
<!-- palette button -->
<div class="abs" style="left:1446.500px;top:397px;width:40px;height:40px;background:#f0f0f0;border:1px solid #fff;border-right-color:#7a7a7a;border-bottom-color:#7a7a7a;box-shadow:inset -1px -1px 0 #b0b0b0;box-sizing:border-box"></div>
<svg class="abs" style="left:1446px;top:397px" width="40" height="40" viewBox="0 0 40 40">
<path d="M5 22 Q3 12 14 9 Q27 6 31 14 Q33 22 27 28 Q22 33 18 31 Q15 29 14 26 Q12 24 9 26 Q6 27 5 22Z" fill="#b8d4ec" stroke="#7a9cc0" stroke-width="1"/>
<circle cx="11" cy="19" r="2.300" fill="#e04030"/><circle cx="15" cy="13.500" r="2.300" fill="#f0c020"/><circle cx="21.500" cy="11.500" r="2.300" fill="#50b040"/><circle cx="19" cy="22" r="2.300" fill="#e8eef4"/>
<path d="M18 32 L29 12 L31.500 13.500 L21 33Z" fill="#e8a050" stroke="#b06820" stroke-width="0.600"/>
<path d="M29 12 Q30 6 34 3 Q35 8 31.500 13.500Z" fill="#c87838" stroke="#8a4a18" stroke-width="0.600"/>
</svg>
<!-- UAC -->
<svg class="abs" style="left:1402px;top:845px" width="22" height="25" viewBox="0 0 22 25">
<path d="M11 1 Q15 4 20.500 4 Q21.500 15 11 24 Q0.500 15 1.500 4 Q7 4 11 1Z" fill="#c8ccd0" stroke="#8a9098" stroke-width="1"/>
<path d="M11 3.500 Q7.500 6 3.800 6 Q3.500 10 4.500 12.500 H11Z" fill="#d83a28"/>
<path d="M11 3.500 Q14.500 6 18.200 6 Q18.500 10 17.500 12.500 H11Z" fill="#3aa83a"/>
<path d="M4.500 12.500 H11 V21.500 Q6 17 4.500 12.500Z" fill="#2a5ad0"/>
<path d="M17.500 12.500 H11 V21.500 Q16 17 17.500 12.500Z" fill="#f0c820"/>
</svg>
<div class="ms" id="t_uac" style="left:1430.500px;top:850.600px">User Account Control</div>
<!-- right window border -->
<div class="abs" style="left:1541px;top:24px;width:10px;height:847px;background:linear-gradient(180deg,#a0a4a8 0,#6e7274 35px,#a8acb0 62px,#60625e 90px,#a6aaae 115px,#a0a4a8 200px,#747678 230px,#4c4c4a 262px,#8a8c8c 300px,#3c3c3a 330px,#6a5048 362px,#8e4a40 395px,#4a4846 425px,#5c5c5a 480px,#4a4a48 515px,#b07060 545px,#c8c0bc 578px,#b04038 608px,#4c4a38 650px,#30342a 700px,#9a9a98 722px,#2c3026 740px,#262a22 847px)"></div>
<div class="abs" style="left:1541px;top:24px;width:3.500px;height:847px;background:linear-gradient(90deg,#fdfdfd 0,#e4e4e4 30%,#4a4a4a 45%,#2e2e2e 80%,rgba(60,60,60,0.4) 100%)"></div>
<div class="abs" style="left:1549px;top:24px;width:2px;height:847px;background:rgba(40,40,40,0.35)"></div>
<!-- DIALOG -->
<style>
.seg{position:absolute;font-family:"Liberation Sans",sans-serif;font-size:12px;white-space:nowrap;line-height:14px;}
.btn{position:absolute;background:#f0f0f0;border:1px solid #fff;border-right-color:#404040;border-bottom-color:#404040;box-shadow:inset -1px -1px 0 #a0a0a0,inset 1px 1px 0 #fff;box-sizing:border-box;}
</style>
<!-- shadow -->
<div class="abs" style="left:536px;top:249px;width:442px;height:281px;border-radius:9px;box-shadow:0 1px 7px 2px rgba(0,0,0,0.55);"></div>
<!-- glass frame -->
<div class="abs" id="dlgframe" style="left:539.500px;top:251.500px;width:434.500px;height:274px;border-radius:7px;border:1px solid #1c1c1c;box-sizing:border-box;backdrop-filter:blur(6px);-webkit-backdrop-filter:blur(6px);background:linear-gradient(rgba(192,194,198,0.8) 0,rgba(188,190,194,0.72) 10px,rgba(172,168,170,0.62) 15px,rgba(138,128,130,0.6) 27px,rgba(50,50,52,0.55) 60px,rgba(20,20,22,0.68) 100%);box-shadow:inset 0 0 0 1px rgba(255,255,255,0.5);overflow:hidden">
<div class="abs" style="left:14px;top:2px;width:150px;height:22px;background:rgba(255,255,255,0.55);filter:blur(7px);border-radius:10px"></div>
</div>
<!-- close button -->
<div class="abs" style="left:920.500px;top:251.500px;width:48px;height:20px;border-radius:0 0 5px 5px;border:1px solid #5a1a10;border-top-color:#3a2020;box-sizing:border-box;background:linear-gradient(#e8b4a6 0,#d88878 42%,#c8452c 50%,#b42c14 85%,#c85a3c 100%);box-shadow:inset 0 0 0 1px rgba(255,255,255,0.45),0 0 0 1px rgba(255,255,255,0.35)"></div>
<svg class="abs" style="left:938px;top:254px" width="16" height="13" viewBox="0 0 16 13">
<path d="M3.200 2.600 L12.200 10.600 M12.200 2.600 L3.200 10.600" stroke="#4a2a28" stroke-width="4.200"/>
<path d="M3.400 2.800 L12 10.400 M12 2.800 L3.400 10.400" stroke="#fff" stroke-width="2.400"/>
</svg>
<!-- title icon + text -->
<svg class="abs" style="left:546px;top:257px" width="18" height="18" viewBox="0 0 18 18">
<path d="M8.300 2.500 H9.900 V5 L16.900 5.300 L16.300 7.300 L13.500 8.600 H9.900 V12.400 L12.300 14 L11.500 15.300 L9.100 16 L6.700 15.300 L5.200 13.600 L8.300 12.400 V8.600 H4.800 L1.800 7.300 L1 5.300 L8.300 5Z" fill="#12908e" stroke="#0a4a4c" stroke-width="0.700"/>
<rect x="8.300" y="1.200" width="1.600" height="1.600" fill="#e8e050"/>
<circle cx="9.100" cy="7.200" r="1.100" fill="#60d8d0"/>
<path d="M10.600 9 L14.500 13" stroke="#080808" stroke-width="2"/><path d="M13.200 11.800 L17.300 16.300" stroke="#e8e030" stroke-width="2"/><path d="M12.600 12.600 L16.200 16.800" stroke="#101010" stroke-width="0.800"/>
</svg>
<div class="seg" id="t_dtitle" style="left:568.500px;top:258.800px;color:#000;letter-spacing:-0.250px">Export as DDS Image</div>
<!-- client -->
<div class="abs" style="left:546px;top:280px;width:422.500px;height:239.500px;background:#f0f0f0;border:1px solid #4a4a4a;box-sizing:border-box;box-shadow:inset 0 0 0 1px #fff,0 0 0 1px rgba(255,255,255,0.45)"></div>
<div class="ms" id="t_sp1" style="left:558px;top:291px">Speichern</div>
<div class="combo" style="left:619px;top:287px;width:205.500px;height:21.500px"></div>
<div class="cbtn" style="left:807px;top:289px;width:15.500px;height:17.500px"></div>
<svg class="abs" style="left:807px;top:289px" width="16" height="18"><path d="M4.500 7 H11.500 L8 11Z" fill="#000"/></svg>
<svg class="abs" style="left:624px;top:291px" width="18" height="15" viewBox="0 0 18 15">
<rect x="1" y="1.500" width="16" height="12" fill="#8c9098"/><rect x="2" y="2.500" width="14" height="9" fill="#1848c0"/><path d="M2 9 L8 6 L16 5 V11.500 H2Z" fill="#3878e0"/><rect x="2" y="11" width="14" height="1.500" fill="#202830"/><circle cx="4" cy="11" r="1" fill="#80d0f0"/>
</svg>
<div class="ms" id="t_desk" style="left:645px;top:291px">Desktop</div>
<!-- toolbar icons -->
<svg class="abs" style="left:828px;top:287px" width="98" height="20" viewBox="828 287 98 20">
<path d="M831 297 L836.500 291.500 V295 H843.500 V299 H836.500 V302.500Z" fill="#a0a0a0"/>
<path d="M852 303 V292.500 L854 290 H859 L860.500 292.500 H867 V303Z" fill="#b8b8b8" stroke="#909090" stroke-width="0.800"/><circle cx="858" cy="297.500" r="1.200" fill="#808080"/>
<path d="M875 303.500 V295 L876.500 293.300 H881.500 L883 295 H887 V303.500Z" fill="#f4f070" stroke="#000" stroke-width="1"/>
<path d="M886.500 289 V295 M883.500 292 H889.500 M884.500 290 L888.500 294 M888.500 290 L884.500 294" stroke="#000" stroke-width="0.700"/>
<rect x="898" y="290" width="16" height="14" fill="#fff" stroke="#000" stroke-width="1.100"/><rect x="898.500" y="290.500" width="15" height="2.500" fill="#3868c0"/>
<g fill="#000080"><rect x="900" y="295" width="2" height="2"/><rect x="900" y="298" width="2" height="2"/><rect x="900" y="301" width="2" height="2"/><rect x="905.500" y="295" width="2" height="2"/><rect x="905.500" y="298" width="2" height="2"/><rect x="905.500" y="301" width="2" height="2"/><rect x="910" y="295" width="2" height="2"/><rect x="910" y="298" width="2" height="2"/><rect x="910" y="301" width="2" height="2"/></g>
<g stroke="#000" stroke-width="0.800"><path d="M902.500 296H904.500M902.500 299H904.500M902.500 302H904.500M907.800 296H909.500M907.800 299H909.500M907.800 302H909.500"/></g>
<path d="M915.800 295 H923 L919.400 299Z" fill="#000"/>
</svg>
<!-- list view -->
<div class="abs" style="left:553px;top:314px;width:408.500px;height:138px;background:#fff;overflow:hidden">
 <div class="abs" style="left:391.800px;top:0;width:16.700px;height:138px;background:#f0f0f0"></div>
 <svg class="abs" style="left:391.800px;top:0" width="16" height="138" viewBox="0 0 16 138">
 <path d="M4.500 10.800 L8 7 L11.500 10.800Z" fill="#404040"/><path d="M4.800 127.200 L8 130.800 L11.200 127.200Z" fill="#404040"/>
 <defs><linearGradient id="thg" x1="0" y1="0" x2="1" y2="0"><stop offset="0" stop-color="#f6f6f6"/><stop offset="0.45" stop-color="#e8e8e8"/><stop offset="0.55" stop-color="#d0d0d0"/><stop offset="1" stop-color="#dadada"/></linearGradient></defs>
 <rect x="1" y="18.800" width="14" height="14" rx="1.500" fill="url(#thg)" stroke="#9a9a9a" stroke-width="1"/>
 </svg>
 <!-- libraries icon -->
 <svg class="abs" style="left:5px;top:5px" width="50" height="50" viewBox="0 0 50 50">
 <defs><linearGradient id="fy" x1="0" y1="0" x2="0" y2="1"><stop offset="0" stop-color="#f8e8a0"/><stop offset="1" stop-color="#e8c860"/></linearGradient>
 <linearGradient id="fb" x1="0" y1="0" x2="0" y2="1"><stop offset="0" stop-color="#b8e4f8"/><stop offset="1" stop-color="#48a8e0"/></linearGradient></defs>
 <path d="M3 4 H20 L22 7 H26 V12 H3Z" fill="#f0dc90" stroke="#c8a850" stroke-width="0.800"/>
 <path d="M14 7 H32 L34 10 H40 V15 H14Z" fill="#f0dc90" stroke="#c8a850" stroke-width="0.800"/>
 <path d="M26 10 H44 L46 13 H48 V20 H26Z" fill="#f0dc90" stroke="#c8a850" stroke-width="0.800"/>
 <rect x="30" y="11" width="13" height="3" fill="#fff"/><rect x="18" y="8" width="12" height="3" fill="#fff"/><rect x="6" y="5" width="11" height="3" fill="#fff"/>
 <rect x="6.500" y="5" width="2.500" height="2.500" fill="#40a040"/><rect x="18" y="8.500" width="2.500" height="2.500" fill="#e05030"/><rect x="31" y="11.500" width="2.500" height="2.500" fill="#3090d0"/>
 <path d="M2 12 H26 L28 15 H48 V44 H2Z" fill="url(#fy)" stroke="#c8a040" stroke-width="0.900"/>
 <path d="M8 46 V32 Q8 29 11 29 H38 Q41 29 41 32 V46 H33 V39 H16 V46Z" fill="url(#fb)" stroke="#3888c0" stroke-width="0.800"/>
 </svg>
 <div class="seg" id="t_bib" style="left:59.500px;top:15.500px;color:#000">Bibliotheken</div>
 <div class="seg" id="t_sys1" style="left:59.500px;top:30.500px;color:#7a7a7a">Systemordner</div>
 <!-- homegroup icon -->
 <svg class="abs" style="left:4px;top:60px" width="50" height="46" viewBox="0 0 50 46">
 <defs>
 <radialGradient id="bl" cx="0.35" cy="0.3" r="0.7"><stop offset="0" stop-color="#c0d8ff"/><stop offset="0.4" stop-color="#3868e0"/><stop offset="1" stop-color="#1030a0"/></radialGradient>
 <radialGradient id="gr" cx="0.35" cy="0.3" r="0.7"><stop offset="0" stop-color="#c8f0c0"/><stop offset="0.4" stop-color="#38a848"/><stop offset="1" stop-color="#106020"/></radialGradient>
 </defs>
 <ellipse cx="33" cy="19" rx="14" ry="13" fill="none" stroke="#b8ccf0" stroke-width="3" opacity="0.7"/>
 <ellipse cx="22" cy="30" rx="12" ry="6" fill="#c8d8f4" opacity="0.6"/>
 <circle cx="25" cy="7" r="4.500" fill="#d0dcf4" opacity="0.8"/>
 <circle cx="9.700" cy="22" r="6.700" fill="url(#bl)"/><circle cx="34.500" cy="10.600" r="5.200" fill="url(#bl)"/>
 <circle cx="28.800" cy="23.600" r="10.800" fill="url(#gr)"/><circle cx="37" cy="35" r="8.800" fill="url(#bl)"/>
 </svg>
 <div class="seg" id="t_heim" style="left:59.500px;top:67.500px;color:#000">Heimnetzgruppe</div>
 <div class="seg" id="t_sys2" style="left:59.500px;top:82.500px;color:#7a7a7a">Systemordner</div>
 <!-- user folder -->
 <svg class="abs" style="left:6px;top:110px" width="46" height="30" viewBox="0 0 46 30">
 <path d="M5 2 L12 1 L29 6 V30 H3 V6Z" fill="#f4e090" stroke="#d4b858" stroke-width="0.800"/>
 <path d="M5 2 L12 1 L14 8 V30 H9 V7Z" fill="#fbf0b8"/>
 <path d="M14 8 L29 6 V30 H14Z" fill="#ecd070"/>
 <circle cx="27" cy="24" r="5.500" fill="#c89878"/><path d="M21 23 Q21 16 28 17 Q33 18 33 24 Q30 19 25 20 Q22 21 21 23Z" fill="#2c2018"/><path d="M17 32 Q18 28 27 28 Q35 28 36 32Z" fill="#303840"/>
 </svg>
 <div class="seg" id="t_schr" style="left:59.500px;top:119.500px;color:#000">Schremmer</div>
 <div class="seg" style="left:59.500px;top:134.500px;color:#7a7a7a">Systemordner</div>
</div>
<!-- fields -->
<div class="ms" id="t_dn" style="left:554.700px;top:463px">Dateiname:</div>
<div class="combo" style="left:627.500px;top:461px;width:233px;height:19.500px"></div>
<div class="ms" id="t_fn" style="left:631px;top:463.500px">steuerwagen-dx1</div>
<div class="abs" style="left:879.800px;top:460px;width:75.500px;height:22.800px;background:#5c5c5c"></div>
<div class="btn" style="left:880.800px;top:461px;width:73.500px;height:20.800px"></div>
<div class="ms" id="t_sp2" style="left:893px;top:463.500px">Speichern</div>
<div class="ms" id="t_dt" style="left:554.700px;top:493.500px">Dateityp:</div>
<div class="combo" style="left:627.500px;top:491px;width:232.500px;height:20px"></div>
<div class="cbtn" style="left:842.500px;top:493px;width:15.500px;height:16px"></div>
<svg class="abs" style="left:842.500px;top:493px" width="16" height="16"><path d="M4.500 6.500 H11.500 L8 10.500Z" fill="#000"/></svg>
<div class="ms" id="t_dd0" style="left:631.500px;top:495px">DDS DXT1</div>
<div class="btn" style="left:879.500px;top:488.500px;width:76px;height:23px"></div>
<div class="ms" id="t_abb" style="left:891px;top:493px">Abbrechen</div>
<!-- dropdown -->
<div class="abs" style="left:628px;top:512px;width:232.500px;height:144.500px;background:#fff;border:1px solid #000;box-sizing:border-box"></div>
<div class="abs" style="left:629px;top:552px;width:230.500px;height:12.800px;background:#3399ff"></div>
<div class="ms" id="t_d1" style="left:631.500px;top:513.600px;line-height:13px">DDS DXT1 (NoAlpha)</div>
<div class="ms" id="t_d2" style="left:631.500px;top:526.600px;line-height:13px">DDS DXT1</div>
<div class="ms" id="t_d3" style="left:631.500px;top:539.600px;line-height:13px">DDS DXT3</div>
<div class="ms" id="t_d4" style="left:631.500px;top:552.600px;line-height:13px;color:#fff">DDS DXT5</div>
<div class="ms" id="t_d5" style="left:631.500px;top:565.600px;line-height:13px">DDS 444-4 16 bit</div>
<div class="ms" id="t_d6" style="left:631.500px;top:578.600px;line-height:13px">DDS 555-1 16 bit</div>
<div class="ms" id="t_d7" style="left:631.500px;top:591.600px;line-height:13px">DDS 565 16 bit</div>
<div class="ms" id="t_d8" style="left:631.500px;top:604.600px;line-height:13px">DDS 888-8 32 bit</div>
<div class="ms" id="t_d9" style="left:631.500px;top:617.600px;line-height:13px">DDS 888 24 bit</div>
<div class="ms" id="t_d10" style="left:631.500px;top:630.600px;line-height:13px">DDS 555 15 bit</div>
<div class="ms" id="t_d11" style="left:631.500px;top:643.600px;line-height:13px">DDS 256 colour</div>
</body>
</html>
